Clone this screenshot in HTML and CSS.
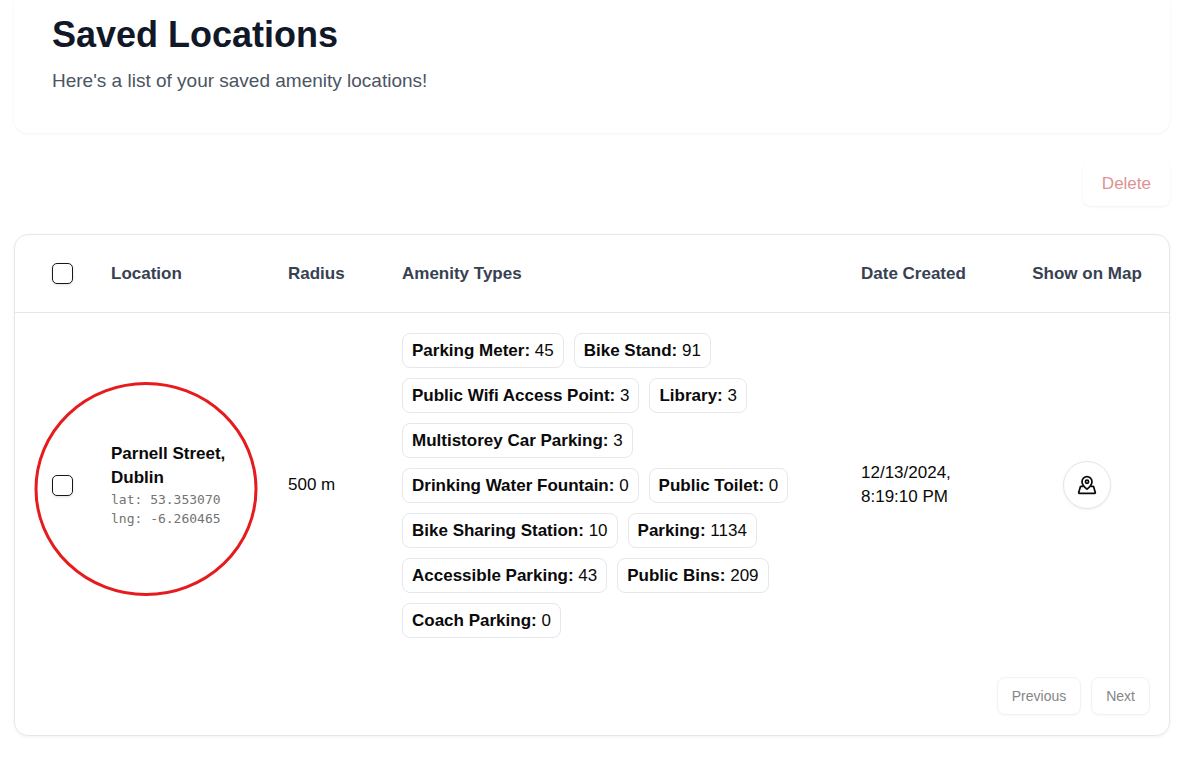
FILE: index.html
```html
<!DOCTYPE html>
<html lang="en">
<head>
<meta charset="utf-8">
<meta name="viewport" content="width=device-width, initial-scale=1">
<title>Saved Locations</title>
<link rel="stylesheet" href="styles.css">
</head>
<body>
<main class="page">
  <header class="intro">
    <h1 class="intro-title">Saved Locations</h1>
    <p class="intro-text">Here's a list of your saved amenity locations!</p>
  </header>

  <div class="actions">
    <button class="button button-delete" type="button" disabled>Delete</button>
  </div>

  <section class="card">
    <table class="locations">
      <colgroup>
        <col class="col-select">
        <col class="col-location">
        <col class="col-radius">
        <col class="col-amenities">
        <col class="col-date">
        <col class="col-map">
      </colgroup>
      <thead>
        <tr>
          <th class="select-cell"><input class="checkbox" type="checkbox" aria-label="Select all"></th>
          <th>Location</th>
          <th>Radius</th>
          <th>Amenity Types</th>
          <th>Date Created</th>
          <th class="map-cell">Show on Map</th>
        </tr>
      </thead>
      <tbody>
        <tr>
          <td class="select-cell">
            <div class="marked">
              <input class="checkbox" type="checkbox" aria-label="Select Parnell Street, Dublin">
              <svg class="marker" width="224" height="214" viewBox="0 0 224 214" fill="none" aria-hidden="true">
                <ellipse cx="112" cy="107" rx="110" ry="105.5" stroke="#e61b1d" stroke-width="3"/>
              </svg>
            </div>
          </td>
          <td>
            <div class="place">Parnell Street, Dublin</div>
            <div class="coords">lat: 53.353070</div>
            <div class="coords">lng: -6.260465</div>
          </td>
          <td>500 m</td>
          <td>
            <ul class="amenities">
              <li class="amenity"><b>Parking Meter:</b> 45</li>
              <li class="amenity"><b>Bike Stand:</b> 91</li>
              <li class="amenity"><b>Public Wifi Access Point:</b> 3</li>
              <li class="amenity"><b>Library:</b> 3</li>
              <li class="amenity"><b>Multistorey Car Parking:</b> 3</li>
              <li class="amenity"><b>Drinking Water Fountain:</b> 0</li>
              <li class="amenity"><b>Public Toilet:</b> 0</li>
              <li class="amenity"><b>Bike Sharing Station:</b> 10</li>
              <li class="amenity"><b>Parking:</b> 1134</li>
              <li class="amenity"><b>Accessible Parking:</b> 43</li>
              <li class="amenity"><b>Public Bins:</b> 209</li>
              <li class="amenity"><b>Coach Parking:</b> 0</li>
            </ul>
          </td>
          <td class="date">12/13/2024, 8:19:10 PM</td>
          <td class="map-cell">
            <button class="map-button" type="button" aria-label="Show on map">
              <svg width="20" height="20" viewBox="0 0 20 20" fill="none" stroke="#0a0a0a" stroke-width="1.7" stroke-linejoin="round" stroke-linecap="round" aria-hidden="true">
                <path d="M10 14.200C7.800 12.400 5 10 5 6.700a5 5 0 0 1 10 0c0 3.300-2.800 5.700-5 7.500z"/>
                <circle cx="10" cy="6.700" r="1.600"/>
                <path d="M5.700 11.400H4Q3.500 11.400 3.300 11.900L1.700 17.500Q1.500 18.300 2.300 18.300h15.400Q18.500 18.300 18.300 17.500L16.700 11.900Q16.500 11.400 16 11.400h-1.700"/>
              </svg>
            </button>
          </td>
        </tr>
      </tbody>
    </table>
    <nav class="pager" aria-label="Pagination">
      <button class="button button-page" type="button" disabled>Previous</button>
      <button class="button button-page" type="button" disabled>Next</button>
    </nav>
  </section>
</main>
</body>
</html>
```

FILE: styles.css
```css
* {
  box-sizing: border-box;
}

body {
  margin: 0;
  background: #fff;
  color: #0a0a0a;
  font-family: "Liberation Sans", Arial, sans-serif;
  font-size: 17px;
  line-height: 24px;
}

.page {
  padding: 0 10px 20px 14px;
}

.intro {
  padding: 11px 38px 38px;
  border-radius: 0 0 14px 14px;
  box-shadow: 0 1px 3px rgba(0, 0, 0, 0.05);
}

.intro-title {
  margin: 0 0 8px;
  color: #111827;
  font-size: 36px;
  line-height: 48px;
}

.intro-text {
  margin: 0;
  color: #4b5563;
  font-size: 19px;
  line-height: 28px;
}

.actions {
  display: flex;
  justify-content: flex-end;
  padding: 29px 0 28px;
}

.button {
  border: 0;
  border-radius: 8px;
  background: #fff;
  font-family: inherit;
}

.button-delete {
  height: 44px;
  padding: 0 19px;
  color: #de9292;
  font-size: 17px;
  box-shadow: 0 1px 3px rgba(0, 0, 0, 0.06);
}

.card {
  border: 1px solid #e5e7eb;
  border-radius: 14px;
  box-shadow: 0 1px 3px rgba(0, 0, 0, 0.06);
}

.locations {
  width: 100%;
  table-layout: fixed;
  border-collapse: collapse;
}

.col-select { width: 76px; }
.col-location { width: 177px; }
.col-radius { width: 114px; }
.col-date { width: 164px; }
.col-map { width: 164px; }

.locations th,
.locations td {
  padding: 20px;
  text-align: left;
  vertical-align: middle;
}

.locations th {
  height: 77px;
  padding-bottom: 18px;
  border-bottom: 1px solid #e5e7eb;
  color: #374151;
  white-space: nowrap;
}

.locations .select-cell {
  padding: 0 18px 0 37px;
}

.locations .map-cell {
  text-align: center;
}

.checkbox {
  display: block;
  width: 21px;
  height: 21px;
  margin: 0;
  appearance: none;
  border: 1px solid #171717;
  border-radius: 5px;
  background: #fff;
  box-shadow: 0 1px 3px rgba(0, 0, 0, 0.12);
}

.marked {
  position: relative;
}

.marker {
  position: absolute;
  top: -93px;
  left: -18px;
  pointer-events: none;
}

.place {
  font-weight: 700;
}

.coords {
  color: #737373;
  font-family: "DejaVu Sans Mono", monospace;
  font-size: 13px;
  line-height: 19px;
}

.amenities {
  display: flex;
  flex-wrap: wrap;
  gap: 10px;
  margin: 0;
  padding: 0;
  list-style: none;
}

.amenity {
  padding: 5px 9px;
  border: 1px solid #e5e7eb;
  border-radius: 8px;
  line-height: 23px;
}

.locations .date {
  padding-right: 40px;
}

.map-button {
  display: inline-flex;
  align-items: center;
  justify-content: center;
  width: 48px;
  height: 48px;
  padding: 0;
  border: 1px solid #e5e5e5;
  border-radius: 50%;
  background: #fff;
  box-shadow: 0 1px 3px rgba(0, 0, 0, 0.06);
  vertical-align: middle;
}

.pager {
  display: flex;
  justify-content: flex-end;
  gap: 10px;
  padding: 19px 19px 20px;
}

.button-page {
  height: 38px;
  padding: 0 14px;
  border: 1px solid #f2f2f2;
  color: #858585;
  font-size: 14px;
  box-shadow: 0 1px 2px rgba(0, 0, 0, 0.03);
}
```
